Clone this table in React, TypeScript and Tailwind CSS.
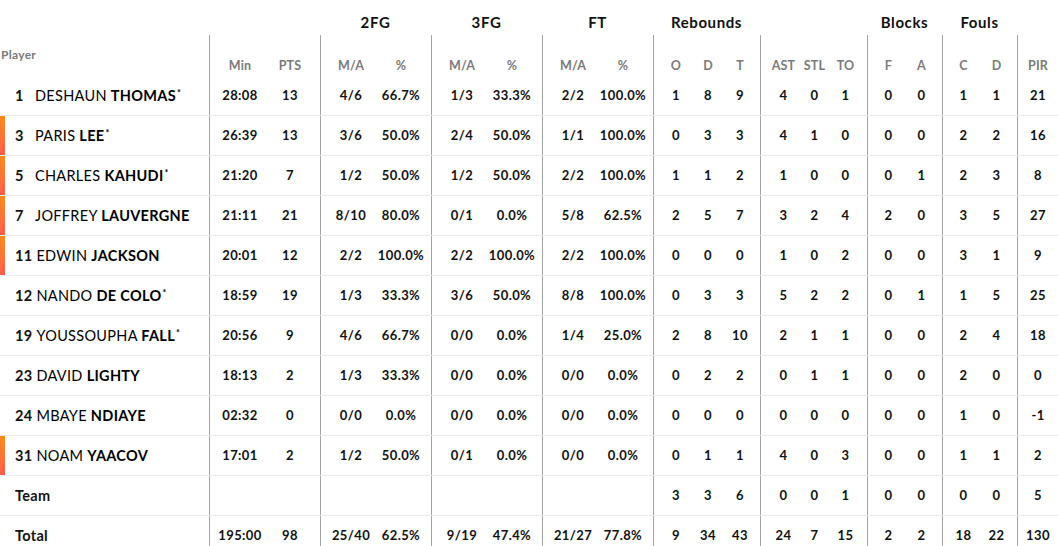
import React from 'react'

type Player = {
  no?: string
  first?: string
  last: string
  star?: boolean
  bar?: boolean
  vals: (string[] | null)[]
}

// each stat group: total width (with the left rule), left padding, sub column width
const groups = [
  { w: 'w-[111px]', pl: 'pl-[5px]', cw: 'w-[50px]' },
  { w: 'w-[111px]', pl: 'pl-[5px]', cw: 'w-[50px]' },
  { w: 'w-[111px]', pl: 'pl-[5px]', cw: 'w-[50px]' },
  { w: 'w-[111px]', pl: 'pl-[5px]', cw: 'w-[50px]' },
  { w: 'w-[107px]', pl: 'pl-[6px]', cw: 'w-[32px]' },
  { w: 'w-[107px]', pl: 'pl-[7px]', cw: 'w-[31px]' },
  { w: 'w-[75px]', pl: 'pl-[4px]', cw: 'w-[33px]' },
  { w: 'w-[75px]', pl: 'pl-[4px]', cw: 'w-[33px]' },
  { w: 'w-[41px]', pl: 'pl-0', cw: 'w-[40px]' },
]

const titles = ['', '2FG', '3FG', 'FT', 'Rebounds', '', 'Blocks', 'Fouls', '']
const subs = [
  ['Min', 'PTS'],
  ['M/A', '%'],
  ['M/A', '%'],
  ['M/A', '%'],
  ['O', 'D', 'T'],
  ['AST', 'STL', 'TO'],
  ['F', 'A'],
  ['C', 'D'],
  ['PIR'],
]

const players: Player[] = [
  { no: '1', first: 'DESHAUN', last: 'THOMAS', star: true, vals: [['28:08', '13'], ['4/6', '66.7%'], ['1/3', '33.3%'], ['2/2', '100.0%'], ['1', '8', '9'], ['4', '0', '1'], ['0', '0'], ['1', '1'], ['21']] },
  { no: '3', first: 'PARIS', last: 'LEE', star: true, bar: true, vals: [['26:39', '13'], ['3/6', '50.0%'], ['2/4', '50.0%'], ['1/1', '100.0%'], ['0', '3', '3'], ['4', '1', '0'], ['0', '0'], ['2', '2'], ['16']] },
  { no: '5', first: 'CHARLES', last: 'KAHUDI', star: true, bar: true, vals: [['21:20', '7'], ['1/2', '50.0%'], ['1/2', '50.0%'], ['2/2', '100.0%'], ['1', '1', '2'], ['1', '0', '0'], ['0', '1'], ['2', '3'], ['8']] },
  { no: '7', first: 'JOFFREY', last: 'LAUVERGNE', bar: true, vals: [['21:11', '21'], ['8/10', '80.0%'], ['0/1', '0.0%'], ['5/8', '62.5%'], ['2', '5', '7'], ['3', '2', '4'], ['2', '0'], ['3', '5'], ['27']] },
  { no: '11', first: 'EDWIN', last: 'JACKSON', bar: true, vals: [['20:01', '12'], ['2/2', '100.0%'], ['2/2', '100.0%'], ['2/2', '100.0%'], ['0', '0', '0'], ['1', '0', '2'], ['0', '0'], ['3', '1'], ['9']] },
  { no: '12', first: 'NANDO', last: 'DE COLO', star: true, vals: [['18:59', '19'], ['1/3', '33.3%'], ['3/6', '50.0%'], ['8/8', '100.0%'], ['0', '3', '3'], ['5', '2', '2'], ['0', '1'], ['1', '5'], ['25']] },
  { no: '19', first: 'YOUSSOUPHA', last: 'FALL', star: true, vals: [['20:56', '9'], ['4/6', '66.7%'], ['0/0', '0.0%'], ['1/4', '25.0%'], ['2', '8', '10'], ['2', '1', '1'], ['0', '0'], ['2', '4'], ['18']] },
  { no: '23', first: 'DAVID', last: 'LIGHTY', vals: [['18:13', '2'], ['1/3', '33.3%'], ['0/0', '0.0%'], ['0/0', '0.0%'], ['0', '2', '2'], ['0', '1', '1'], ['0', '0'], ['2', '0'], ['0']] },
  { no: '24', first: 'MBAYE', last: 'NDIAYE', vals: [['02:32', '0'], ['0/0', '0.0%'], ['0/0', '0.0%'], ['0/0', '0.0%'], ['0', '0', '0'], ['0', '0', '0'], ['0', '0'], ['1', '0'], ['-1']] },
  { no: '31', first: 'NOAM', last: 'YAACOV', bar: true, vals: [['17:01', '2'], ['1/2', '50.0%'], ['0/1', '0.0%'], ['0/0', '0.0%'], ['0', '1', '1'], ['4', '0', '3'], ['0', '0'], ['1', '1'], ['2']] },
  { last: 'Team', vals: [null, null, null, null, ['3', '3', '6'], ['0', '0', '1'], ['0', '0'], ['0', '0'], ['5']] },
  { last: 'Total', vals: [['195:00', '98'], ['25/40', '62.5%'], ['9/19', '47.4%'], ['21/27', '77.8%'], ['9', '34', '43'], ['24', '7', '15'], ['2', '2'], ['18', '22'], ['130']] },
]

function Row({ p }: { p: Player }) {
  return (
    <div className="flex h-[40px] border-b border-[#ebebeb]">
      <div className="relative flex w-[209px] shrink-0 items-center pl-[15px]">
        {p.bar && (
          <div className="absolute left-0 top-0 bottom-0 w-[5px] bg-gradient-to-b from-[#ff8a14] to-[#ff5c4a]" />
        )}
        {p.no ? (
          <>
            <span className="inline-block min-w-[16px] mr-[4px] text-[14.5px] font-bold tracking-[0.3px]">{p.no}</span>
            <span className="text-[14.5px] whitespace-nowrap tracking-[0.3px] text-black">
              <span className="font-normal">{p.first} </span>
              <span className="font-bold">{p.last}</span>
              {p.star && <sup className="ml-[1px] text-[9px] font-bold">*</sup>}
            </span>
          </>
        ) : (
          <span className="text-[14.5px] font-bold tracking-[0.3px]">{p.last}</span>
        )}
      </div>
      {groups.map((g, i) => (
        <div key={i} className={`flex shrink-0 items-center border-l border-[#a3a3a3] ${g.w} ${g.pl}`}>
          {p.vals[i]?.map((v, j) => (
            <span key={j} className={`${g.cw} shrink-0 text-center text-[13px] font-bold tracking-[0.4px]`}>
              {v}
            </span>
          ))}
        </div>
      ))}
    </div>
  )
}

export default function App() {
  return (
    <div className="w-[1058px] h-[546px] overflow-hidden bg-white text-[#111]" style={{ fontFamily: 'Lato, "Noto Sans", sans-serif' }}>
      {/* group titles */}
      <div className="flex h-[35px]">
        <div className="w-[209px] shrink-0" />
        {groups.map((g, i) => (
          <div key={i} className={`shrink-0 pt-[12px] text-center text-[15px] font-bold leading-[20px] tracking-[0.6px] ${g.w}`}>
            {titles[i]}
          </div>
        ))}
      </div>
      {/* sub headers */}
      <div className="flex h-[41px]">
        <div className="flex w-[209px] shrink-0 items-center pl-[1px] pb-[1px] text-[12px] font-bold tracking-[0.3px] text-[#7a7a7a]">
          Player
        </div>
        {groups.map((g, i) => (
          <div key={i} className={`flex shrink-0 items-end pb-[2px] border-l border-[#a3a3a3] ${g.w} ${g.pl}`}>
            {subs[i].map((s, j) => (
              <span key={j} className={`${g.cw} shrink-0 text-center text-[12.5px] font-bold leading-[16px] tracking-[0.2px] text-[#7a7a7a]`}>
                {s}
              </span>
            ))}
          </div>
        ))}
      </div>
      {players.map((p, i) => (
        <Row key={i} p={p} />
      ))}
    </div>
  )
}
